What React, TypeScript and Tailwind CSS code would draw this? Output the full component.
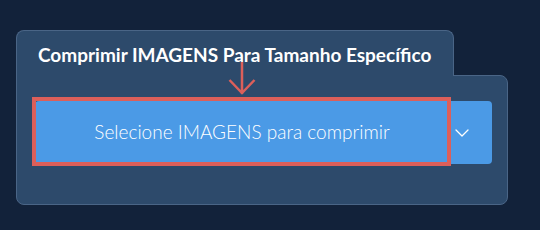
import { ChevronDown } from 'lucide-react'

export default function App() {
  return (
    <div className="h-[230px] w-[540px] bg-[#12223a] pl-4 pt-[30px] font-['Lato','Noto_Sans',sans-serif]">
      <div className="w-[492px]">
        {/* tab sits over the body's top border */}
        <div className="relative z-10 -mb-px w-[438px] rounded-t-lg border border-b-0 border-[#4a6586] bg-[#2d4a6b] pb-[10px] pl-[21px] pt-[13px]">
          <h2 className="text-[19px] font-bold leading-[22px] text-white">Comprimir IMAGENS Para Tamanho Específico</h2>
        </div>
        <div className="h-[130px] rounded-b-lg rounded-tr-lg border border-[#4a6586] bg-[#2d4a6b] pl-[18px] pt-[25px]">
          <div className="relative flex h-[63px] w-[457px]">
            <button className="flex flex-1 items-center justify-center rounded-l bg-[#4b9ae6] pr-[2px] text-[19px] font-light text-white">
              Selecione IMAGENS para comprimir
            </button>
            <button className="flex w-[41px] items-center rounded-r bg-[#4b9ae6] pl-[-1px] text-white">
              <ChevronDown size={24} strokeWidth={1.3} className="-ml-[1px]" />
            </button>
            {/* highlight annotation */}
            <div className="pointer-events-none absolute -left-[3px] -top-[4px] z-20 h-[69px] w-[419px] border-4 border-[#dc5f5a]" />
            <svg className="pointer-events-none absolute -top-[40px] left-[193px] z-20" width="28" height="36" viewBox="0 0 28 36" fill="none">
              <path d="M14 1 V33 M1.5 19 L14 32 L26.5 19" stroke="#dc5f5a" strokeWidth="2.5" />
            </svg>
          </div>
        </div>
      </div>
    </div>
  )
}
